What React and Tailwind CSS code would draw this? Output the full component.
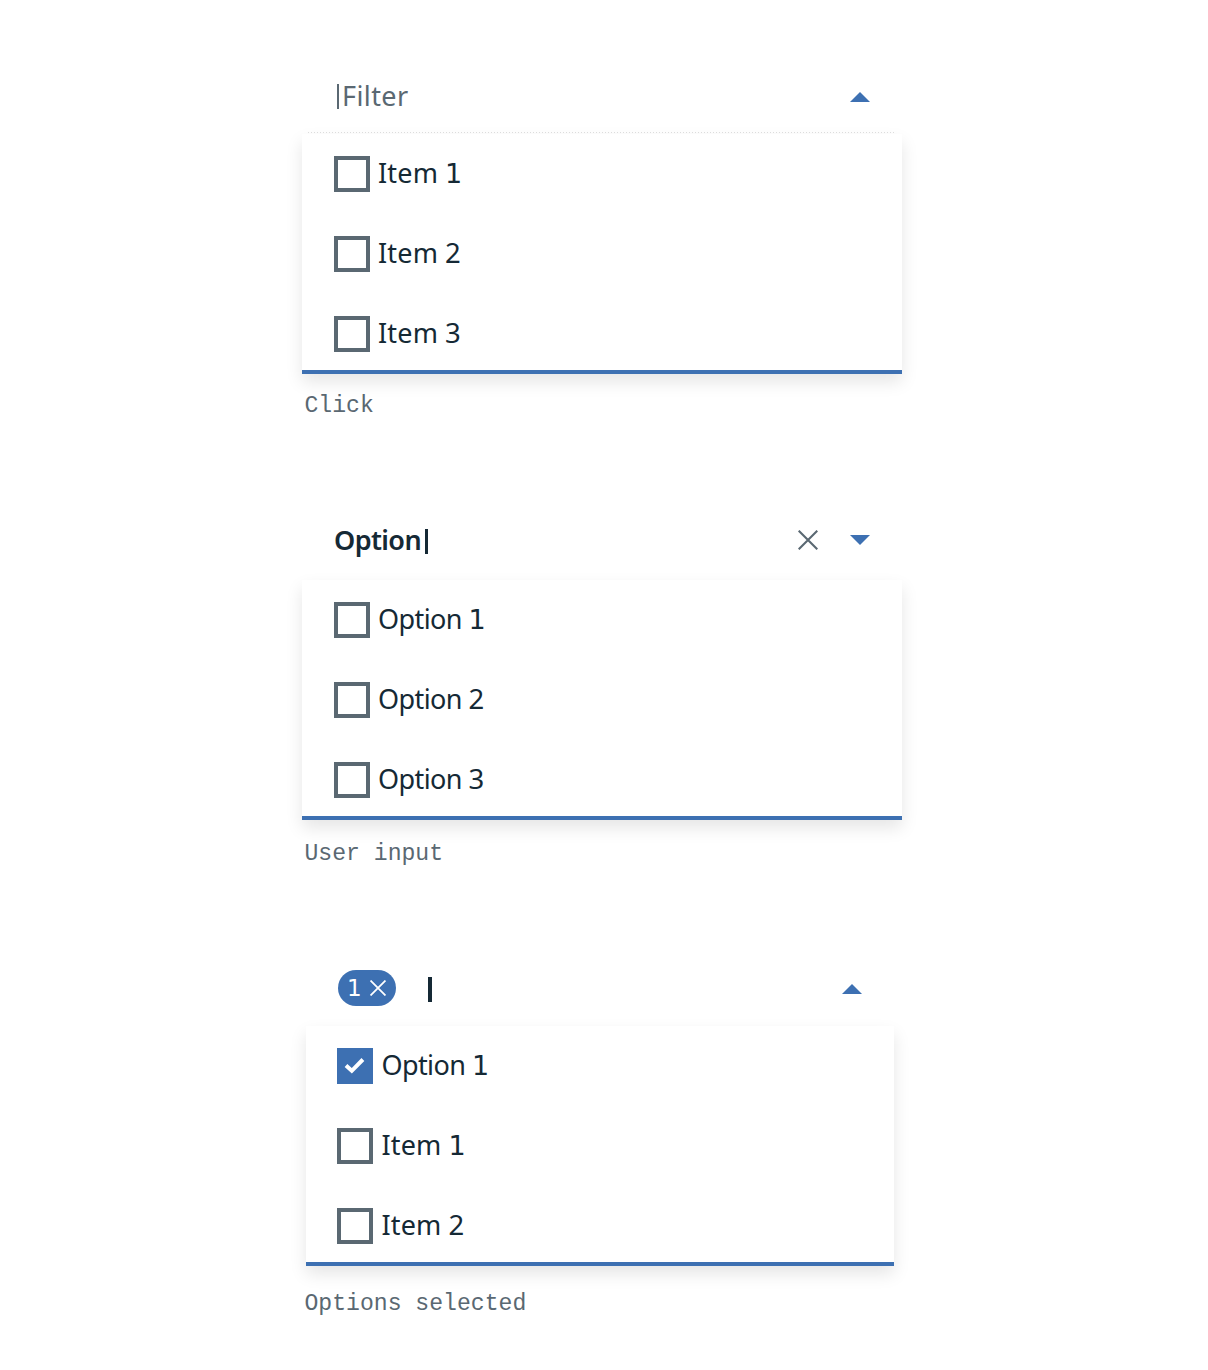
import React from 'react';

const sans = "font-['Noto_Sans',sans-serif]";

function Caret({ up }) {
  return (
    <svg width="20" height="10" viewBox="0 0 20 10" className="shrink-0" fill="#3d70b2">
      <path d={up ? 'M0 10L10 0L20 10Z' : 'M0 0H20L10 10Z'} />
    </svg>
  );
}

function Cross({ size, color, width }) {
  return (
    <svg width={size} height={size} viewBox="0 0 20 20" className="shrink-0" fill="none" stroke={color} strokeWidth={width}>
      <path d="M0.7 0.7L19.3 19.3M19.3 0.7L0.7 19.3" />
    </svg>
  );
}

function Checkbox({ checked }) {
  if (!checked) return <span className="size-9 shrink-0 border-4 border-[#5a6872] bg-white" />;
  return (
    <span className="flex size-9 shrink-0 items-center justify-center bg-[#3d70b2]">
      <svg width="36" height="36" viewBox="0 0 36 36" fill="none" stroke="#fff" strokeWidth="4">
        <path d="M9 17.5L14.8 22.8L25.9 11.5" />
      </svg>
    </span>
  );
}

function Digit({ children }) {
  const one = children === '1';
  return (
    <span className={one ? "font-['DejaVu_Sans',sans-serif] text-[27px]" : 'text-[27.5px]'}>{children}</span>
  );
}

function Row({ word, digit, checked, wordClass }) {
  return (
    <li className="flex h-20 items-center gap-2">
      <Checkbox checked={checked} />
      <span className="flex h-9 items-baseline text-[27px] leading-[34px] text-[#152935]">
        <span className={wordClass}>{word}</span>
        <Digit>{digit}</Digit>
      </span>
    </li>
  );
}

function Menu({ rows, className = 'pl-8' }) {
  return (
    <ul className={`h-60 border-b-4 border-[#3d70b2] bg-white shadow-[0_8px_16px_0_rgba(0,0,0,0.1)] ${className}`}>
      {rows.map(([word, digit, checked]) => (
        <Row
          key={word + digit}
          word={word}
          digit={digit}
          checked={checked}
          wordClass={word === 'Item' ? 'w-[67px] tracking-[0.2px]' : 'w-[90.5px] tracking-[-0.6px]'}
        />
      ))}
    </ul>
  );
}

const caption = "font-['Liberation_Mono',monospace] text-[23.1px] leading-8 text-[#5a6872] pl-[2.5px]";

export default function App() {
  return (
    <main className={`h-[1370px] w-[1208px] bg-white pl-[302px] pt-[60px] ${sans}`}>
      <section className="h-[446px] w-[600px]">
        <div className="flex h-[74px] items-center justify-between pl-8 pr-8">
          <span className="flex items-center pb-[2px] text-[27px] leading-9 text-[#5a6872]">
            <span className="ml-[3px] mr-[3px] h-[25px] w-[2px] bg-[#5a6872]" />
            <span className="tracking-[0.4px]">Filter</span>
          </span>
          <Caret up />
        </div>
        <div className="relative">
          <Menu rows={[['Item', '1'], ['Item', '2'], ['Item', '3']]} />
          <div className="absolute -top-[2px] left-[6px] h-px w-[588px] bg-[repeating-linear-gradient(90deg,#dcdcdc_0_1px,transparent_1px_3px)]" />
        </div>
        <p className={`mt-4 ${caption}`}>Click</p>
      </section>

      <section className="h-[450px] w-[600px]">
        <div className="flex h-[74px] items-center justify-between pl-8 pr-8">
          <span className="flex items-center pb-1 text-[27px] font-semibold leading-[34px] text-[#152935]">
            <span className="w-[91px] pb-[2px] tracking-[-0.6px]">Option</span>
            <span className="h-[25px] w-[3px] bg-[#152935]" />
          </span>
          <span className="flex items-center gap-8 pb-[6px]">
            <Cross size={20} color="#5a6872" width={2.1} />
            <Caret />
          </span>
        </div>
        <Menu rows={[['Option', '1'], ['Option', '2'], ['Option', '3']]} />
        <p className={`mt-[18px] ${caption}`}>User input</p>
      </section>

      <section className="w-[600px]">
        <div className="flex h-[70px] items-center pb-1 pl-9 pr-10">
          <span className="mb-[2px] flex h-9 w-[58px] items-center rounded-full bg-[#3d70b2] pl-[9px]">
            <span className="w-[23px] font-['DejaVu_Sans',sans-serif] text-[23px] leading-9 text-white">1</span>
            <Cross size={16} color="#fff" width={2.2} />
          </span>
          <span className="ml-8 h-[25px] w-1 bg-[#152935]" />
          <span className="ml-auto"><Caret up /></span>
        </div>
        <Menu className="ml-1 w-[588px] pl-[31.4px]" rows={[['Option', '1', true], ['Item', '1'], ['Item', '2']]} />
        <p className={`mt-[22px] ${caption}`}>Options selected</p>
      </section>
    </main>
  );
}
